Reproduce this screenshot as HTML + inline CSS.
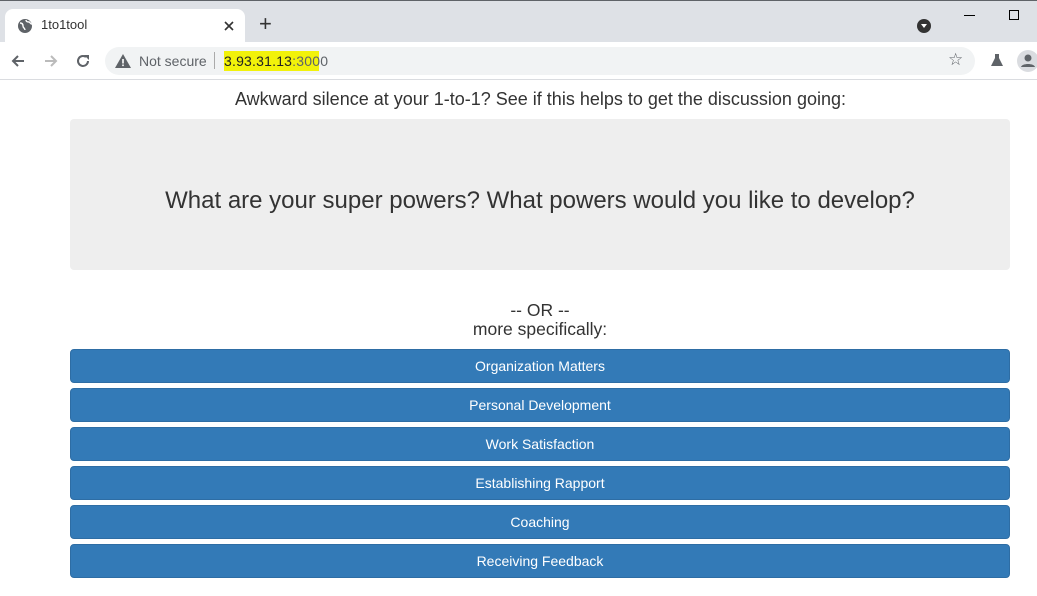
<!DOCTYPE html>
<html><head><meta charset="utf-8"><style>
*{box-sizing:border-box;margin:0;padding:0}
body{width:1037px;height:596px;overflow:hidden;background:#fff;font-family:"Liberation Sans",Arial,sans-serif;position:relative;color:#333}
.abs{position:absolute}
.btn{position:absolute;left:70px;width:940px;height:34px;background:#337ab7;border:1px solid #2e6da4;border-radius:4px;color:#fff;font-size:14px;text-align:center;line-height:32px}
</style></head><body>
<div class="abs" style="left:0;top:0;width:1037px;height:1px;background:#5f6368"></div>
<div class="abs" style="left:0;top:1px;width:1037px;height:41px;background:#dee1e6"></div>
<div class="abs" style="left:5px;top:9px;width:240px;height:34px;background:#fff;border-radius:8px 8px 0 0"></div>
<svg class="abs" style="left:17px;top:18px" width="16" height="16" viewBox="0 0 16 16"><circle cx="8" cy="8" r="7" fill="#5f6368"/><path d="M3 5c2 0 3 1 3 3s2 2 2 4M9 2c0 2 2 2 3 2s1 2 3 2" stroke="#fff" stroke-width="1.4" fill="none"/></svg>
<div class="abs" style="left:41px;top:17px;font-size:13px;color:#333">1to1tool</div>
<svg class="abs" style="left:224px;top:21px" width="10" height="10"><path d="M1 1l8 8M9 1l-8 8" stroke="#333" stroke-width="1.6"/></svg>
<div class="abs" style="left:259px;top:11px;font-size:22px;color:#333">+</div>
<svg class="abs" style="left:917px;top:19px" width="14" height="14"><circle cx="7" cy="7" r="7" fill="#333"/><path d="M4 5h6l-3 4z" fill="#fff"/></svg>
<div class="abs" style="left:964px;top:15px;width:11px;height:1px;background:#000"></div>
<div class="abs" style="left:1009px;top:10px;width:10px;height:10px;border:1px solid #000"></div>
<div class="abs" style="left:0;top:79px;width:1037px;height:1px;background:#dadce0"></div>
<svg class="abs" style="left:10px;top:53px" width="16" height="16"><path d="M14 8H3M8 3L3 8l5 5" stroke="#5f6368" stroke-width="2" fill="none"/></svg>
<svg class="abs" style="left:43px;top:53px" width="16" height="16"><path d="M2 8h11M8 3l5 5-5 5" stroke="#bbb" stroke-width="2" fill="none"/></svg>
<svg class="abs" style="left:75px;top:53px" width="16" height="16"><path d="M13 8a5 5 0 1 1-2-4" stroke="#5f6368" stroke-width="2" fill="none"/><path d="M9 2h5v5z" fill="#5f6368"/></svg>
<div class="abs" style="left:105px;top:47px;width:870px;height:28px;background:#f1f3f4;border-radius:14px"></div>
<svg class="abs" style="left:115px;top:54px" width="16" height="14"><path d="M8 0L16 14H0z" fill="#5f6368"/><rect x="7.2" y="5" width="1.6" height="4.5" fill="#fff"/><rect x="7.2" y="10.5" width="1.6" height="1.6" fill="#fff"/></svg>
<div class="abs" style="left:139px;top:53px;font-size:14px;color:#5f6368">Not secure</div>
<div class="abs" style="left:214px;top:52px;width:1px;height:17px;background:#aaa"></div>
<div class="abs" style="left:224px;top:51px;width:95px;height:20px;background:#f2f20a"></div>
<div class="abs" style="left:224px;top:53px;font-size:14px;color:#202124;letter-spacing:0.2px">3.93.31.13<span style="color:#5f6368">:3000</span></div>
<div class="abs" style="left:948px;top:50px;font-size:17px;color:#5f6368">☆</div>
<svg class="abs" style="left:990px;top:53px" width="14" height="14"><path d="M5 1h4v4l4 8H1l4-8z" fill="#5f6368"/></svg>
<svg class="abs" style="left:1017px;top:50px" width="22" height="22"><circle cx="11" cy="11" r="11" fill="#dadce0"/><circle cx="11" cy="8" r="3.5" fill="#5f6368"/><path d="M4 17c1-4 13-4 14 0z" fill="#5f6368"/></svg>
<div class="abs" style="left:0;top:89px;width:1081px;text-align:center;font-size:18px">Awkward silence at your 1-to-1? See if this helps to get the discussion going:</div>
<div class="abs" style="left:70px;top:119px;width:940px;height:151px;background:#eee;border-radius:4px"></div>
<div class="abs" style="left:70px;top:187px;width:940px;text-align:center;font-size:24px">What are your super powers? What powers would you like to develop?</div>
<div class="abs" style="left:70px;top:301px;width:940px;text-align:center;font-size:17.5px;line-height:19px">-- OR --<br>more specifically:</div>
<div class="btn" style="top:349px">Organization Matters</div>
<div class="btn" style="top:388px">Personal Development</div>
<div class="btn" style="top:427px">Work Satisfaction</div>
<div class="btn" style="top:466px">Establishing Rapport</div>
<div class="btn" style="top:505px">Coaching</div>
<div class="btn" style="top:544px">Receiving Feedback</div>
</body></html>
